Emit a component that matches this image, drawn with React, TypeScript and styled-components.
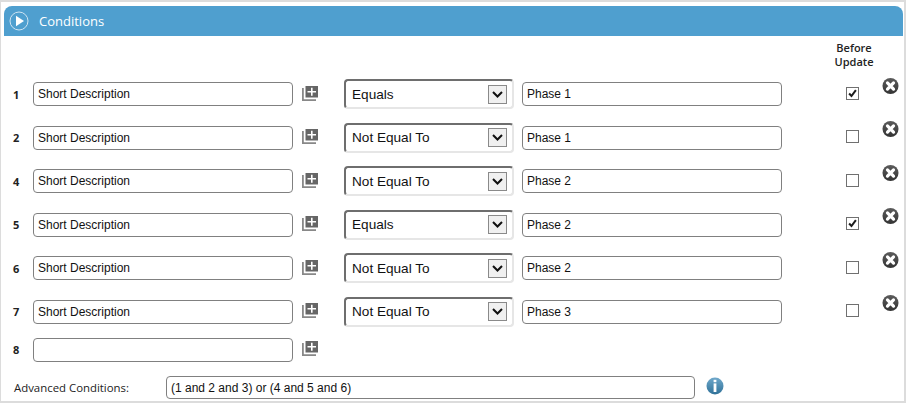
import styled, { createGlobalStyle } from "styled-components";

type Condition = {
  id: number;
  field: string;
  op?: string;
  value?: string;
  before?: boolean;
};

const conditions: Condition[] = [
  { id: 1, field: "Short Description", op: "Equals", value: "Phase 1", before: true },
  { id: 2, field: "Short Description", op: "Not Equal To", value: "Phase 1" },
  { id: 4, field: "Short Description", op: "Not Equal To", value: "Phase 2" },
  { id: 5, field: "Short Description", op: "Equals", value: "Phase 2", before: true },
  { id: 6, field: "Short Description", op: "Not Equal To", value: "Phase 2" },
  { id: 7, field: "Short Description", op: "Not Equal To", value: "Phase 3" },
  { id: 8, field: "" },
];

export default function App() {
  return (
    <>
      <GlobalStyle />
      <Frame>
        <Header>
          <PlayIcon />
          <HeaderTitle>Conditions</HeaderTitle>
        </Header>

        <ColumnHead>Before Update</ColumnHead>

        <Rows>
          {conditions.map((c) => (
            <Row key={c.id}>
              <RowNumber>{c.id}</RowNumber>
              <TextBox readOnly value={c.field} />
              <AddIcon />
              {c.op ? (
                <>
                  <SelectBox>
                    <span>{c.op}</span>
                    <SelectArrow>
                      <svg width="11" height="7" viewBox="0 0 11 7">
                        <path d="M1 1l4.5 4.5L10 1" fill="none" stroke="#111" strokeWidth="2" />
                      </svg>
                    </SelectArrow>
                  </SelectBox>
                  <TextBox readOnly value={c.value} />
                  <CheckCell>
                    <CheckBox>
                      {c.before && (
                        <svg width="13" height="13" viewBox="0 0 13 13">
                          <path d="M2.5 6.500l2.800 3L10.500 2.500" fill="none" stroke="#1c1c1c" strokeWidth="2.400" />
                        </svg>
                      )}
                    </CheckBox>
                  </CheckCell>
                  <DeleteIcon />
                </>
              ) : null}
            </Row>
          ))}
        </Rows>

        <AdvancedRow>
          <AdvancedLabel>Advanced Conditions:</AdvancedLabel>
          <AdvancedInput readOnly value="(1 and 2 and 3) or (4 and 5 and 6)" />
          <InfoIcon />
        </AdvancedRow>
      </Frame>
    </>
  );
}

// ===== icons =====
function PlayIcon() {
  return (
    <svg width="20" height="20" viewBox="0 0 20 20">
      <circle cx="10" cy="10" r="9" fill="none" stroke="#cfe4f2" strokeWidth="1" />
      <path d="M7 4.800L15 10l-8 5.200z" fill="#fff" />
    </svg>
  );
}

function AddIcon() {
  return (
    <IconSlot>
      <svg width="16" height="15" viewBox="0 0 16 15">
        <path d="M0 2h1.800v11.200H14V15H0z" fill="#888" />
        <path d="M3.500 0H16v11.500H3.500z" fill="#666" />
        <path d="M9 1.800h1.600v3.200H14v1.600h-3.400v3.200H9V6.600H5.500V5H9z" fill="#fff" />
      </svg>
    </IconSlot>
  );
}

function DeleteIcon() {
  return (
    <DeleteSlot>
      <svg width="18" height="18" viewBox="0 0 18 18">
        <defs>
          <linearGradient id="del" x1="0" y1="0" x2="0" y2="1">
            <stop offset="0" stopColor="#5c5c5c" />
            <stop offset="1" stopColor="#333" />
          </linearGradient>
        </defs>
        <circle cx="9" cy="9" r="8.500" fill="url(#del)" />
        <path d="M5.800 5.800l6.400 6.400M12.200 5.800l-6.400 6.400" stroke="#fff" strokeWidth="3.400" strokeLinecap="round" />
      </svg>
    </DeleteSlot>
  );
}

function InfoIcon() {
  return (
    <InfoSlot>
      <svg width="18" height="18" viewBox="0 0 18 18">
        <defs>
          <linearGradient id="inf" x1="0" y1="0" x2="0" y2="1">
            <stop offset="0" stopColor="#6fa8cb" />
            <stop offset="1" stopColor="#2f7198" />
          </linearGradient>
        </defs>
        <circle cx="9" cy="9" r="8.500" fill="url(#inf)" />
        <rect x="7.600" y="2.800" width="2.800" height="2.400" fill="#fff" />
        <rect x="7.600" y="6.400" width="2.800" height="8.600" fill="#fff" />
      </svg>
    </InfoSlot>
  );
}

// ===== styled =====
const GlobalStyle = createGlobalStyle`
  html, body { margin: 0; padding: 0; background: #fff; }
  body { font-family: "Liberation Sans", Arial, sans-serif; }
`;

const Frame = styled.div`
  box-sizing: border-box;
  width: 906px;
  height: 403px;
  overflow: hidden;
  padding: 4px 1px 0 3px;
  background: #fff;
  border-top: 2px solid #dcdcdc;
  border-bottom: 2px solid #dcdcdc;
  border-left: 1px solid #dcdcdc;
  border-right: 2px solid #dcdcdc;
`;

const Header = styled.div`
  height: 30px;
  display: flex;
  align-items: center;
  gap: 10px;
  padding-left: 5px;
  background: #4f9fcf;
  border-radius: 8px 8px 0 0;
`;

const HeaderTitle = styled.span`
  font-family: "Open Sans", sans-serif;
  font-size: 13px;
  color: #fff;
`;

const ColumnHead = styled.div`
  width: 50px;
  height: 40px;
  box-sizing: border-box;
  margin-left: 825px;
  padding-top: 5px;
  font-family: "Open Sans", sans-serif;
  font-size: 11px;
  font-weight: 600;
  line-height: 14px;
  text-align: center;
  color: #222;
`;

const Rows = styled.div`
  display: flex;
  flex-direction: column;
  margin-top: 6px;
`;

const Row = styled.div`
  display: grid;
  grid-template-columns: 29px 260px 51px 178px 260px 100px 17px;
  grid-template-rows: 24px;
  align-items: center;
  height: 24px;
  margin-bottom: 19.6px;

  &:nth-child(6),
  &:nth-child(7) {
    margin-bottom: 14px;
  }
`;

const RowNumber = styled.span`
  padding-left: 9px;
  font-family: "Open Sans", sans-serif;
  font-size: 11px;
  font-weight: 700;
  color: #222;
`;

const TextBox = styled.input`
  box-sizing: border-box;
  width: 100%;
  height: 24px;
  padding: 0 4px;
  border: 1px solid #808080;
  border-radius: 4px;
  outline: none;
  background: #fff;
  font-family: "Liberation Sans", Arial, sans-serif;
  font-size: 12px;
  color: #111;
`;

const AdvancedInput = styled(TextBox)`
  height: 23px;
`;

const IconSlot = styled.div`
  display: flex;
  padding-left: 9px;
  margin-top: -2px;
`;

const SelectBox = styled.div`
  box-sizing: border-box;
  width: 170px;
  height: 30px;
  display: flex;
  align-items: center;
  justify-content: space-between;
  padding: 0 5px 0 6px;
  background: #fff;
  border-style: solid;
  border-width: 2px;
  border-color: #6e6e6e #e6e6e6 #e6e6e6 #6e6e6e;
  border-radius: 4px;
  font-size: 13.6px;
  color: #111;
`;

const SelectArrow = styled.div`
  box-sizing: border-box;
  width: 19px;
  height: 19px;
  display: flex;
  align-items: center;
  justify-content: center;
  background: #f0f0f0;
  border: 1px solid #8a8a8a;
`;

const CheckCell = styled.div`
  display: flex;
  padding-left: 64px;
  margin-top: -2px;
`;

const CheckBox = styled.div`
  box-sizing: border-box;
  width: 13px;
  height: 13px;
  display: flex;
  align-items: center;
  justify-content: center;
  background: #fff;
  border: 1px solid #707070;
`;

const DeleteSlot = styled.div`
  display: flex;
  margin-top: -17px;
`;

const AdvancedRow = styled.div`
  display: grid;
  grid-template-columns: 162px 529px 29px;
  align-items: center;
  height: 24px;
`;

const AdvancedLabel = styled.span`
  padding-left: 10px;
  font-family: "Open Sans", sans-serif;
  font-size: 11.400px;
  color: #222;
`;

const InfoSlot = styled.div`
  display: flex;
  padding-left: 11px;
  margin-top: -3px;
`;
